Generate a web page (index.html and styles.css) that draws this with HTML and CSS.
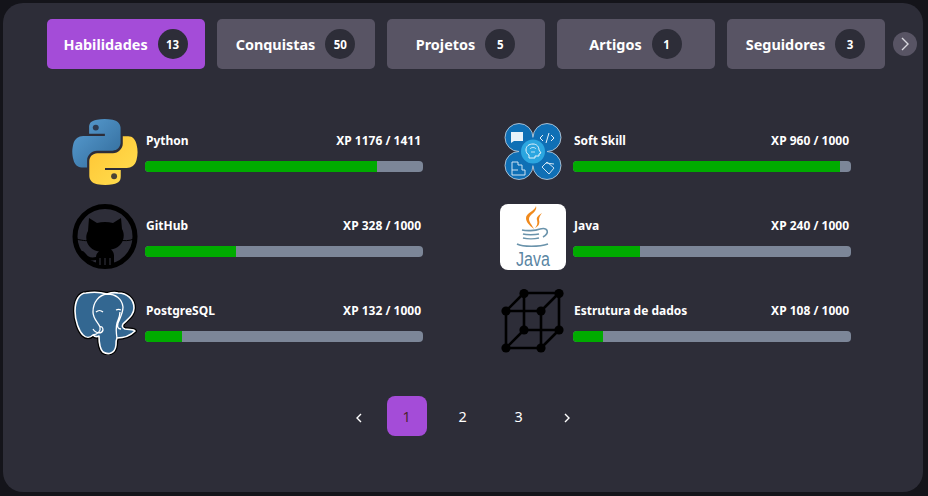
FILE: index.html
```html
<!DOCTYPE html>
<html lang="pt-BR">
<head>
    <meta charset="UTF-8">
    <meta name="viewport" content="width=device-width, initial-scale=1.0">
    <title>Perfil</title>
    <link rel="stylesheet" href="styles.css">
</head>
<body>
    <div class="panel">
        <div class="tabs">
            <a class="tab tab-active">Habilidades <span class="badge">13</span></a>
            <a class="tab">Conquistas <span class="badge">50</span></a>
            <a class="tab">Projetos <span class="badge">5</span></a>
            <a class="tab">Artigos <span class="badge">1</span></a>
            <a class="tab">Seguidores <span class="badge">3</span></a>
            <button class="tab-next">
                <svg width="10" height="14" viewBox="0 0 10 14"><path d="M2 1l6 6-6 6" fill="none" stroke="#d8d8de" stroke-width="1.4"/></svg>
            </button>
        </div>

        <div class="skills">
            <div class="skill">
                <svg class="skill-icon" viewBox="0 0 111 111">
                    <defs>
                        <linearGradient id="pyblue" x1="0" y1="0" x2="1" y2="1"><stop offset="0" stop-color="#5a9fd4"/><stop offset="1" stop-color="#306998"/></linearGradient>
                        <linearGradient id="pyyellow" x1="0" y1="0" x2="1" y2="1"><stop offset="0" stop-color="#ffe052"/><stop offset="1" stop-color="#ffc331"/></linearGradient>
                    </defs>
                    <path fill="url(#pyblue)" d="M54.9 0C50.3 0 45.9.4 42.1 1.1 30.8 3.1 28.8 7.2 28.8 14.9V25h26.5v3.4H18.8C11.1 28.4 4.4 33 2.3 41.7c-2.4 10-2.5 16.2 0 26.6 1.9 7.7 6.3 13.3 14 13.3h9.1v-12c0-8.7 7.5-16.4 16.5-16.4h26.5c7.4 0 13.3-6.1 13.3-13.5V14.9c0-7.1-6-12.5-13.3-13.8C63.8.4 59.4 0 54.9 0z"/>
                    <circle cx="40" cy="14.5" r="5" fill="#2d3a50"/>
                    <g transform="rotate(180 55.4 55.4)">
                        <path fill="url(#pyyellow)" d="M54.9 0C50.3 0 45.9.4 42.1 1.1 30.8 3.1 28.8 7.2 28.8 14.9V25h26.5v3.4H18.8C11.1 28.4 4.4 33 2.3 41.7c-2.4 10-2.5 16.2 0 26.6 1.9 7.7 6.3 13.3 14 13.3h9.1v-12c0-8.7 7.5-16.4 16.5-16.4h26.5c7.4 0 13.3-6.1 13.3-13.5V14.9c0-7.1-6-12.5-13.3-13.8C63.8.4 59.4 0 54.9 0z"/>
                        <circle cx="40" cy="14.5" r="5" fill="#4a4436"/>
                    </g>
                </svg>
                <div class="skill-info">
                    <div class="skill-head"><span>Python</span><span>XP 1176 / 1411</span></div>
                    <div class="bar"><div class="bar-fill" style="width: 83.3%"></div></div>
                </div>
            </div>

            <div class="skill">
                <svg class="skill-icon" viewBox="0 0 66 66">
                    <g fill="#0f6fb5" stroke="#c9d6e2" stroke-width=".8">
                        <circle cx="19" cy="18.5" r="14"/>
                        <circle cx="47" cy="18.5" r="14"/>
                        <circle cx="19" cy="46.5" r="14"/>
                        <circle cx="47" cy="46.5" r="14"/>
                    </g>
                    <rect x="19" y="18.5" width="28" height="28" fill="#0f6fb5"/>
                    <circle cx="33" cy="32.5" r="12" fill="#2ba6e0"/>
                    <path d="M29 39v-3c-2-1-3-3-3-5 0-4 3-6 7-6s6 3 6 6l2 3-2 1v2h-4v2z" fill="none" stroke="#e6f3fb" stroke-width="1"/>
                    <path d="M30 30c1-2 5-2 6 0M31 33h4" fill="none" stroke="#e6f3fb" stroke-width=".8"/>
                    <path d="M11 13h12v9H14l-3 2z" fill="#e8f2fa"/>
                    <path d="M43 22l-3-3 3-3M51 16l3 3-3 3M49 14l-3 10" fill="none" stroke="#e8f2fa" stroke-width="1"/>
                    <path d="M12 43h6v3h4v5h3v5H12zM18 51h-6" fill="none" stroke="#cfe4f3" stroke-width="1"/>
                    <path d="M42 48l5-5 7 6-5 6zM46 44l8 1" fill="none" stroke="#cfe4f3" stroke-width="1"/>
                </svg>
                <div class="skill-info">
                    <div class="skill-head"><span>Soft Skill</span><span>XP 960 / 1000</span></div>
                    <div class="bar"><div class="bar-fill" style="width: 96%"></div></div>
                </div>
            </div>

            <div class="skill">
                <svg class="skill-icon" viewBox="0 0 66 66">
                    <circle cx="33" cy="32.5" r="30" fill="none" stroke="#000" stroke-width="5"/>
                    <path d="M17 14l8 5c5-1.5 11-1.5 16 0l8-5 1 11c3 5 2 12-2 16-3 3-6 4-9 4.500 2 1.500 3 3.500 3 6.500v10H24v-6c-5 1-9 0-11-3-2-3-4-5-7-6 4-1 6 0 8 3 2 3 5 4 10 3 0-2 1-4 3-5.500-3-.5-6-1.500-9-4.500-4-4-5-11-2-16z" fill="#000"/>
                    <path d="M4 35c8 2 12 2 15 1M47 36c5 1 10 1 15-1" stroke="#000" stroke-width="1" fill="none"/>
                    <path d="M28 54v7M33 54v7M38 54v7" stroke="#2d2d38" stroke-width="1.2"/>
                </svg>
                <div class="skill-info">
                    <div class="skill-head"><span>GitHub</span><span>XP 328 / 1000</span></div>
                    <div class="bar"><div class="bar-fill" style="width: 32.8%"></div></div>
                </div>
            </div>

            <div class="skill">
                <div class="java-icon">
                    <svg width="66" height="47" viewBox="0 0 66 47">
                        <path d="M36 2c2 6-7 8-7 13 0 3 3 6 5 10-5-4-8-7-8-11 0-5 9-7 10-12zM42 9c-3 2-6 4-5 7 1 3 0 6-2 8 4-2 5-5 4-8 0-2 1-5 3-7z" fill="#f08a1d"/>
                        <path d="M22 26c4 1 13 1 18-1M23 30c3 1 12 1 16 0M23 34c4 1 12 1 16 0M17 40c6 3 22 3 31 0M40 25c8-2 10 4 3 8" fill="none" stroke="#6a93ab" stroke-width="1.6"/>
                    </svg>
                    <span class="java-word">Java</span>
                </div>
                <div class="skill-info">
                    <div class="skill-head"><span>Java</span><span>XP 240 / 1000</span></div>
                    <div class="bar"><div class="bar-fill" style="width: 24%"></div></div>
                </div>
            </div>

            <div class="skill">
                <svg class="skill-icon" viewBox="0 0 66 66">
                    <path d="M14 4C7 4 3 12 3 22c0 10 4 20 8 24 3 3 7 3 10 0 2 2 4 2 6 1 0 7 1 13 4 16 5 3 12 2 13-7 0-3 0-5 1-7 6 0 13-2 18-7-1-2-6-1-10-2-3-1-3-3-2-5 5-5 11-9 11-16 0-9-7-15-16-15-4-1-8 0-11 1-7-2-15-2-21-1z" fill="#336791" stroke="#000" stroke-width="4" stroke-linejoin="round"/>
                    <path d="M14 4C7 4 3 12 3 22c0 10 4 20 8 24 3 3 7 3 10 0 2 2 4 2 6 1 0 7 1 13 4 16 5 3 12 2 13-7 0-3 0-5 1-7 6 0 13-2 18-7-1-2-6-1-10-2-3-1-3-3-2-5 5-5 11-9 11-16 0-9-7-15-16-15-4-1-8 0-11 1-7-2-15-2-21-1z" fill="#336791" stroke="#fff" stroke-width="1.6" stroke-linejoin="round"/>
                    <path d="M35 5c-8 1-14 8-14 18 0 7 5 10 7 15 1 4-2 7-7 8M21 40c3 5 9 5 10 1 0-3-2-4-3-3M35 5c9 0 15 5 16 13 0 6-3 11-5 16-1 4 0 6 3 6M45 49c-1-6-1-11 0-15 1-3 3-7 3-11" fill="none" stroke="#fff" stroke-width="1.3"/>
                    <path d="M24 23c2-2 5-2 7 0M44 21c2-1 3-1 5 0" fill="none" stroke="#fff" stroke-width="1.2"/>
                </svg>
                <div class="skill-info">
                    <div class="skill-head"><span>PostgreSQL</span><span>XP 132 / 1000</span></div>
                    <div class="bar"><div class="bar-fill" style="width: 13.2%"></div></div>
                </div>
            </div>

            <div class="skill">
                <svg class="skill-icon" viewBox="0 0 66 66">
                    <g fill="none" stroke="#000" stroke-width="2.6">
                        <path d="M6 22H41V59H6zM24 4H59V41H24zM6 22L24 4M41 22L59 4M41 59L59 41M6 59L24 41"/>
                    </g>
                    <g fill="#000">
                        <circle cx="6" cy="22" r="4.6"/><circle cx="41" cy="22" r="4.6"/><circle cx="6" cy="59" r="4.6"/><circle cx="41" cy="59" r="4.6"/>
                        <circle cx="24" cy="4.6" r="4.6"/><circle cx="59" cy="4.6" r="4.6"/><circle cx="24" cy="41" r="4.6"/><circle cx="59" cy="41" r="4.6"/>
                    </g>
                </svg>
                <div class="skill-info">
                    <div class="skill-head"><span>Estrutura de dados</span><span>XP 108 / 1000</span></div>
                    <div class="bar"><div class="bar-fill" style="width: 10.8%"></div></div>
                </div>
            </div>
        </div>

        <div class="pager">
            <a class="page-arrow">
                <svg width="8" height="10" viewBox="0 0 8 10"><path d="M6 1L2 5l4 4" fill="none" stroke="#fff" stroke-width="1.4"/></svg>
            </a>
            <a class="page page-active">1</a>
            <a class="page">2</a>
            <a class="page">3</a>
            <a class="page-arrow">
                <svg width="8" height="10" viewBox="0 0 8 10"><path d="M2 1l4 4-4 4" fill="none" stroke="#fff" stroke-width="1.4"/></svg>
            </a>
        </div>
    </div>
</body>
</html>
```

FILE: styles.css
```css
html, body{
    height: 100%;
}
body{
    margin: 0;
    padding: 3px 5px 4px 3px;
    box-sizing: border-box;
    background-color: #14141a;
    font-family: "Noto Sans", "Open Sans", sans-serif;
    color: white;
    overflow: hidden;
}
.panel{
    height: 100%;
    background-color: #2d2d38;
    border-radius: 20px;
    padding: 16px 0 0 44px;
    box-sizing: border-box;
}
.tabs{
    display: flex;
    align-items: center;
    gap: 12px;
}
.tab{
    width: 158px;
    height: 50px;
    padding-right: 1px;
    box-sizing: border-box;
    display: flex;
    align-items: center;
    justify-content: center;
    gap: 10px;
    background-color: #585464;
    border-radius: 5px;
    font-size: 14.4px;
    font-weight: 700;
    white-space: nowrap;
}
.tab-active{
    background-color: #a44cd8;
}
.badge{
    width: 30px;
    height: 30px;
    border-radius: 50%;
    background-color: #2d2d38;
    display: flex;
    align-items: center;
    justify-content: center;
    font-size: 11.5px;
    flex-shrink: 0;
}
.tab-next{
    width: 24px;
    height: 24px;
    margin-left: -4px;
    padding: 0;
    border: none;
    border-radius: 50%;
    background-color: #585464;
    display: flex;
    align-items: center;
    justify-content: center;
}
.skills{
    display: grid;
    grid-template-columns: 428px 352px;
    grid-auto-rows: 66px;
    row-gap: 19px;
    margin: 50px 0 0 25px;
}
.skill{
    display: flex;
    align-items: center;
    gap: 7px;
}
.skill-icon{
    width: 66px;
    height: 66px;
    flex-shrink: 0;
}
.skill-info{
    width: 278px;
}
.skill-head{
    display: flex;
    justify-content: space-between;
    padding: 0 2px 0 1px;
    font-size: 12px;
    font-weight: 700;
    line-height: 16px;
    margin-bottom: 12px;
}
.bar{
    height: 11px;
    background-color: #7c8698;
    border-radius: 4px;
    overflow: hidden;
}
.bar-fill{
    height: 100%;
    background-color: #00ab00;
}
.java-icon{
    width: 66px;
    height: 66px;
    flex-shrink: 0;
    background-color: white;
    border-radius: 8px;
    display: flex;
    flex-direction: column;
    align-items: center;
}
.java-word{
    color: #5a86a3;
    font-family: "Liberation Sans", sans-serif;
    font-size: 16px;
    line-height: 16px;
    margin-top: 1px;
    transform: scaleY(1.25);
}
.pager{
    display: flex;
    justify-content: center;
    align-items: center;
    gap: 16px;
    margin: 41px 0 0 -45px;
}
.page{
    width: 40px;
    height: 40px;
    border-radius: 8px;
    display: flex;
    align-items: center;
    justify-content: center;
    font-size: 14.4px;
}
.page-active{
    background-color: #a44cd8;
    color: #4a2430;
}
.page-arrow{
    width: 24px;
    height: 40px;
    padding-top: 3px;
    box-sizing: border-box;
    display: flex;
    align-items: center;
    justify-content: center;
}
```
